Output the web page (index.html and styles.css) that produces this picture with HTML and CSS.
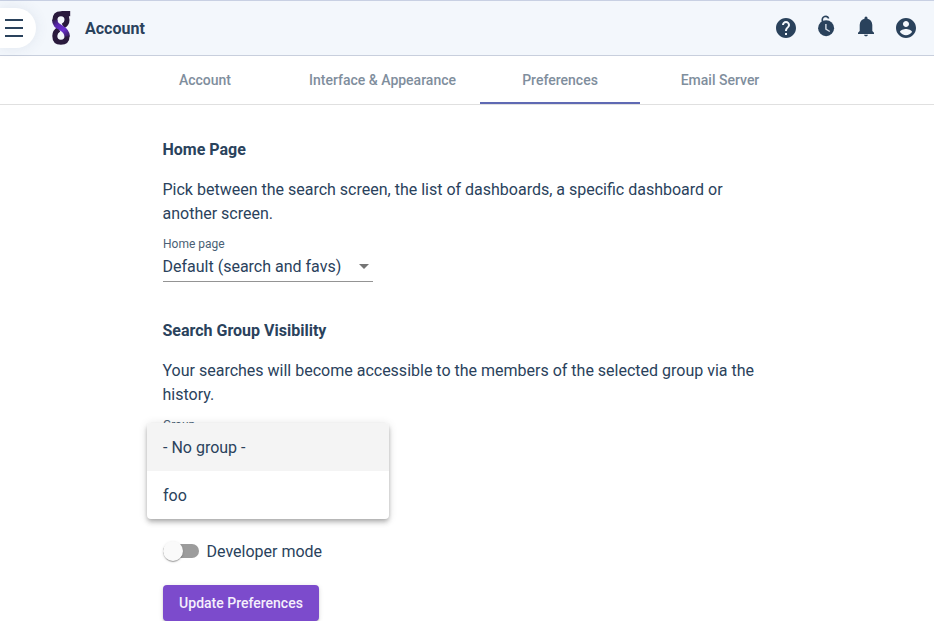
FILE: index.html
```html
<!DOCTYPE html>
<html lang="en">
<head>
<meta charset="utf-8">
<title>Account</title>
<link rel="stylesheet" href="styles.css">
</head>
<body>
<header class="topbar">
  <button class="menu-button" aria-label="Menu"><span class="menu-line"></span><span class="menu-line"></span><span class="menu-line"></span></button>
  <svg class="logo" viewBox="0 0 20 36">
    <defs><linearGradient id="ribbon" gradientUnits="userSpaceOnUse" x1="2" y1="9" x2="17" y2="29"><stop offset="0" stop-color="#2a1a3d"/><stop offset=".3" stop-color="#5a27b0"/><stop offset=".6" stop-color="#6a2fd0"/><stop offset="1" stop-color="#2a1a3d"/></linearGradient></defs>
    <path d="M10 1.100h9.200v5.200h-5z" fill="#2a1a3d"/>
    <path d="M3.800 10.500C3.800 5.800 6 3.700 10 3.700s6 2.300 6 6.200c0 3-1.500 4.700-4 6.100" fill="none" stroke="#2a1a3d" stroke-width="5"/>
    <path d="M8 19.300C5 21 3.800 22.800 3.800 26c0 4.200 2.300 6.200 6.100 6.200s6.200-2 6.200-6.200" fill="none" stroke="#2a1a3d" stroke-width="5"/>
    <path d="M3.800 9.800c0 4.300 2.200 5.700 5.900 7.800 4 2.300 6.500 4.500 6.500 8.900" fill="none" stroke="url(#ribbon)" stroke-width="5.600"/>
  </svg>
  <h1 class="title">Account</h1>
  <nav class="actions">
    <svg class="action" viewBox="0 0 24 24"><path d="M12 2C6.480 2 2 6.480 2 12s4.480 10 10 10 10-4.480 10-10S17.520 2 12 2zm1 17h-2v-2h2v2zm2.070-7.750l-.9.920C13.450 12.900 13 13.500 13 15h-2v-.5c0-1.100.450-2.100 1.170-2.830l1.240-1.260c.370-.360.590-.860.590-1.410 0-1.100-.9-2-2-2s-2 .9-2 2H8c0-2.210 1.790-4 4-4s4 1.790 4 4c0 .880-.360 1.680-.930 2.250z"/></svg>
    <svg class="action" viewBox="0 0 24 24"><circle cx="12.100" cy="12.200" r="8"/><path class="ring" d="M8.500 6C7-.2 13.500-1 14.700 2.500"/><path class="hands" d="M11.900 8v5.200l3.900 2.300"/></svg>
    <svg class="action" viewBox="0 0 24 24"><path d="M12 20.300c1.100 0 2-.7 2-1.500h-4c0 .8.900 1.500 2 1.500zM18.300 15V9c0-3.400-2.100-5.500-4.800-6.200V2a1.500 1.500 0 0 0-3 0v.8C7.800 3.500 5.700 5.600 5.700 9v6L4 16.700V18h16v-1.300z"/></svg>
    <svg class="action" viewBox="0 0 24 24"><path d="M12 2C6.480 2 2 6.480 2 12s4.480 10 10 10 10-4.480 10-10S17.520 2 12 2zm0 3c1.660 0 3 1.340 3 3s-1.340 3-3 3-3-1.340-3-3 1.340-3 3-3zm0 14.200c-2.500 0-4.710-1.280-6-3.220.030-1.990 4-3.080 6-3.080 1.990 0 5.970 1.090 6 3.080-1.290 1.940-3.500 3.220-6 3.220z"/></svg>
  </nav>
</header>
<nav class="tabs">
  <a class="tab">Account</a>
  <a class="tab">Interface &amp; Appearance</a>
  <a class="tab tab-active">Preferences</a>
  <a class="tab">Email Server</a>
</nav>
<main class="page">
  <section class="section">
    <h2 class="heading">Home Page</h2>
    <p class="text">Pick between the search screen, the list of dashboards, a specific dashboard or another screen.</p>
    <div class="field">
      <span class="field-label">Home page</span>
      <div class="select"><span>Default (search and favs)</span><span class="arrow"></span></div>
    </div>
  </section>
  <section class="section">
    <h2 class="heading">Search Group Visibility</h2>
    <p class="text">Your searches will become accessible to the members of the selected group via the history.</p>
    <div class="field">
      <span class="field-label">Group</span>
      <div class="menu">
        <div class="option option-selected">- No group -</div>
        <div class="option">foo</div>
      </div>
    </div>
  </section>
  <div class="toggle"><span class="track"><span class="thumb"></span></span><span class="toggle-label">Developer mode</span></div>
  <button class="submit">Update Preferences</button>
</main>
</body>
</html>
```
FILE: styles.css
```css
* { box-sizing: border-box; }

body {
  margin: 0;
  height: 641px;
  overflow: hidden;
  background: #fff;
  color: #2a425c;
  font: 16px/24px Roboto, sans-serif;
}

.topbar {
  display: flex;
  align-items: center;
  height: 56px;
  padding-right: 16px;
  background: #f3f7fc;
  border-top: 1px solid #c8d0e3;
  border-bottom: 1px solid #c8cfdd;
}

.menu-button {
  display: flex;
  flex-direction: column;
  justify-content: center;
  gap: 6px;
  width: 36px;
  height: 40px;
  padding: 0 0 0 5px;
  border: 0;
  border-radius: 0 20px 20px 0;
  background: #fff;
  box-shadow: 0 0 14px rgba(60, 80, 120, .1);
}

.menu-line { width: 18px; height: 2px; background: #2a425c; }

.logo { width: 20px; height: 36px; margin-left: 15px; }

.title {
  margin: 0 0 0 14px;
  padding-top: 2px;
  font-size: 16px;
  font-weight: 700;
  line-height: 24px;
}

.actions { display: flex; gap: 16px; margin-left: auto; }

.action { width: 24px; height: 24px; fill: #2a425c; overflow: visible; }
.ring { fill: none; stroke: #2a425c; stroke-width: 1.6; }
.hands { fill: none; stroke: #d5dce6; stroke-width: 1.4; }

.tabs {
  display: flex;
  height: 49px;
  padding-left: 125px;
  border-bottom: 1px solid #e0e0e0;
}

.tab {
  min-width: 160px;
  height: 48px;
  padding: 0 24px;
  color: #7f8e9d;
  font-size: 14px;
  font-weight: 500;
  line-height: 48px;
  text-align: center;
  white-space: nowrap;
}

.tab-active { border-bottom: 2px solid #5f69b3; }

.page {
  height: 516px;
  padding: 33px 171.5px 0 162.5px;
  overflow: hidden;
}

.section { height: 181px; }

.heading { margin: 0 0 16px; font-size: 16px; font-weight: 700; line-height: 24px; }

.text { margin: 0; }

.field { display: flex; flex-direction: column; position: relative; width: 210px; padding-top: 10px; }

.field-label { padding-left: .5px; font-size: 12px; line-height: 16px; color: #4a5f75; }

.select {
  display: flex;
  align-items: center;
  justify-content: space-between;
  height: 30px;
  padding: 0 4px 0 0;
  border-bottom: 1px solid #949494;
}

.arrow { border: 5px solid transparent; border-top-color: #757575; border-bottom: 0; }

.menu {
  position: absolute;
  top: 16px;
  left: -15.5px;
  width: 242px;
  border-radius: 4px;
  overflow: hidden;
  background: #fff;
  box-shadow: 0 2px 4px -1px rgba(0, 0, 0, .2), 0 4px 5px rgba(0, 0, 0, .14), 0 1px 10px rgba(0, 0, 0, .12);
}

.option { height: 48px; padding: 1px 16px 0; line-height: 48px; }
.option-selected { background: #f4f4f4; }

.toggle { display: flex; align-items: center; gap: 8px; height: 24px; margin-top: 39px; }

.toggle-label { padding-top: 2px; }

.track { display: flex; align-items: center; width: 36px; height: 14px; border-radius: 7px; background: #9c9c9c; }

.thumb {
  width: 20px;
  height: 20px;
  border-radius: 50%;
  background: #fafafa;
  box-shadow: 0 2px 1px -1px rgba(0, 0, 0, .2), 0 1px 1px rgba(0, 0, 0, .14), 0 1px 3px rgba(0, 0, 0, .12);
}

.submit {
  display: block;
  height: 36px;
  margin: 22px 0 0 .5px;
  width: 156px;
  padding: 0 16px;
  border: 0;
  border-radius: 4px;
  background: #7c4bcc;
  color: #f5effc;
  font: 500 14px/36px Roboto, sans-serif;
  white-space: nowrap;
  box-shadow: 0 3px 1px -2px rgba(0, 0, 0, .2), 0 2px 2px rgba(0, 0, 0, .14), 0 1px 5px rgba(0, 0, 0, .12);
}
```
